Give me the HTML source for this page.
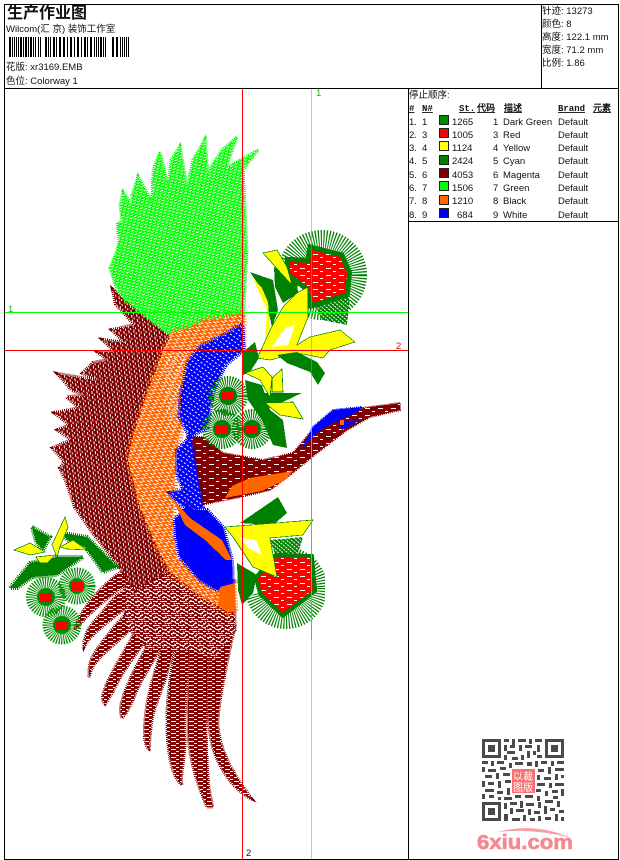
<!DOCTYPE html>
<html><head><meta charset="utf-8">
<style>
html,body{margin:0;padding:0;background:#fff;width:620px;height:860px;overflow:hidden}
svg{display:block}
text{font-family:"Liberation Sans","WenQuanYi Zen Hei","Noto Sans CJK SC",sans-serif;font-size:9.5px;fill:#111}
.b{font-weight:bold;text-decoration:underline;font-family:"Liberation Mono","WenQuanYi Zen Hei",monospace;font-size:9px}
.em path,.em use{shape-rendering:crispEdges}
</style></head><body>
<svg width="620" height="860" viewBox="0 0 620 860" xmlns="http://www.w3.org/2000/svg">
<defs>
<pattern id="pg" width="4" height="3" patternUnits="userSpaceOnUse" patternTransform="rotate(12)"><rect x="0" y="0" width="2" height="1" fill="#fff"/><rect x="2" y="2" width="1" height="1" fill="#fff"/></pattern>
<pattern id="pm" width="5" height="5" patternUnits="userSpaceOnUse" patternTransform="rotate(-8)"><rect x="1" y="0" width="1" height="3" fill="#fff"/><rect x="3" y="3" width="1" height="2" fill="#fff"/></pattern>
<pattern id="pn" width="9" height="4" patternUnits="userSpaceOnUse"><rect x="0" y="1" width="5" height="1" fill="#fff"/><rect x="5" y="3" width="3" height="1" fill="#fff"/></pattern>
<pattern id="pk" width="13" height="7" patternUnits="userSpaceOnUse"><rect x="1" y="2" width="5" height="1" fill="#fff"/><rect x="8" y="5" width="3" height="1" fill="#fff"/></pattern>
<pattern id="po" width="7" height="4" patternUnits="userSpaceOnUse" patternTransform="rotate(25)"><rect x="0" y="1" width="4" height="1" fill="#fff"/><rect x="3" y="3" width="3" height="1" fill="#fff"/></pattern>
<pattern id="pb" width="4" height="4" patternUnits="userSpaceOnUse" patternTransform="rotate(35)"><rect x="0" y="1" width="2" height="1" fill="#fff"/></pattern>
<pattern id="pf" width="4" height="3" patternUnits="userSpaceOnUse" patternTransform="rotate(35)"><rect x="0" y="1" width="2" height="1" fill="#fff"/></pattern>
<pattern id="pfl" width="3" height="3" patternUnits="userSpaceOnUse" patternTransform="rotate(40)"><rect x="0" y="1" width="2" height="1" fill="#fff"/></pattern>
<clipPath id="cf1"><path d="M280 225H375V335H310L305 290 280 262Z"/></clipPath>
<clipPath id="cf2"><path d="M243 600L262 590 280 540H325V640H240Z"/></clipPath>
<path id="wing" d="M258 150L240 160 226 168 237 137 222 150 212 165 208 173 205 139 193 160 187 187 180 146 171 160 168 187 160 152 153 170 152 202 138 176 132 195 132 205 123 192 120 205 122 222 117 223 119 240 117 250 110 268 115 285 125 300 150 320 173 337 185 345 243 325 247 250 243 170Z"/>
<path id="up" d="M113 290L116 304 135 325 112 330 125 343 103 340 115 352 98 352 108 360 93 363 83 373 105 382 58 374 72 390 88 396 67 397 80 408 55 413 70 425 58 430 72 440 53 448 65 462 60 468 67 483 75 507 93 533 117 563 135 590 170 570 150 520 135 470 140 420 155 385 170 350 172 337 150 320 125 300Z"/>
<path id="base" d="M125 570L170 565 235 610 235 630 215 660 190 650 150 650 125 625Z"/>
<path id="low" d="M125 570L170 565 235 610 235 630 215 660 190 650 150 650 125 625Z
M235 625C228 660 218 700 218 725 220 755 238 780 252 799 235 792 218 768 212 745 206 720 208 680 210 650Z
M210 640C207 680 205 725 207 760 208 785 210 795 213 807L207 807C200 790 192 770 189 745 186 715 190 680 190 640Z
M190 640C188 680 183 710 185 740 185 760 180 775 182 785 175 780 170 765 168 745 165 715 168 680 178 640Z
M175 640C168 680 158 695 153 715 150 730 150 742 149 749 144 745 144 735 145 720 147 695 155 670 165 640Z
M165 640C152 665 140 680 133 700 128 710 126 714 122 718 120 712 120 708 122 700 128 680 140 660 150 640Z
M150 635C135 655 120 675 113 692L105 704C101 700 102 695 105 688 112 670 125 650 135 632Z
M135 625C115 645 100 655 92 668L89 677C88 665 92 655 98 648 105 638 115 625 125 615Z
M125 608C105 625 90 635 84 647 83 635 90 625 100 615 108 605 115 595 125 590Z
M125 585C105 600 90 612 75 630 78 615 90 600 100 590 108 582 115 575 125 570Z"/>
<path id="org" d="M165 346L172 333 190 328 205 320 225 318 243 312 243 350 200 350 190 368 183 420 177 450 175 477 173 517 177 557 200 580 220 583 233 583 235 612 228 612 200 595 170 572 157 547 140 507 128 460 132 440 147 393 160 360Z"/>
<path id="neck" d="M187 437L203 437 223 453 263 460 293 453 310 433 337 417 363 408 400 403 400 410 370 417 347 430 317 453 290 475 270 490 240 497 200 505 195 480Z"/>
<path id="blu1" d="M242 325L225 335 200 347 188 363 181 395 180 417 190 437 207 427 213 390 225 365 243 350Z"/>
<path id="blu2" d="M190 437L177 450 177 473 183 490 170 493 180 505 197 510 203 507 198 477Z"/>
<path id="blu3" d="M175 520L176 537 180 557 200 580 217 590 233 585 232 560 223 527 207 510 195 510 187 505Z"/>
</defs>

<g class="em">
<!-- lower wing -->
<use href="#low" fill="#800000" stroke="#800000" stroke-width="3" stroke-dasharray="1 1"/>
<use href="#low" fill="url(#pn)"/>
<use href="#base" fill="url(#pf)"/>
<!-- upper left wing -->
<use href="#up" fill="#800000" stroke="#800000" stroke-width="4" stroke-dasharray="1 1"/>
<use href="#up" fill="url(#pm)"/>
<!-- green wing -->
<use href="#wing" fill="#00ff00" stroke="#00ff00" stroke-width="3" stroke-dasharray="1 1"/>
<use href="#wing" fill="url(#pg)"/>
<!-- neck -->
<use href="#neck" fill="#800000" stroke="#800000" stroke-width="2" stroke-dasharray="1 1"/>
<use href="#neck" fill="url(#pk)"/>
<path d="M232 486L250 478 293 471 285 480 262 491 225 498Z" fill="#ff6600"/>
<!-- orange -->
<use href="#org" fill="#ff6600" stroke="#ff6600" stroke-width="7" stroke-dasharray="1 2"/>
<use href="#org" fill="url(#po)"/>
<path d="M165 350L185 345 185 400 172 440 165 400Z" fill="url(#pb)"/>
<!-- blue -->
<use href="#blu1" fill="#0000ff" stroke="#0000ff" stroke-width="5" stroke-dasharray="1 1"/>
<use href="#blu1" fill="url(#pb)"/>
<use href="#blu2" fill="#0000ff" stroke="#0000ff" stroke-width="4" stroke-dasharray="1 1"/>
<use href="#blu2" fill="url(#pb)"/>
<use href="#blu3" fill="#0000ff" stroke="#0000ff" stroke-width="4" stroke-dasharray="1 1"/>
<path d="M172 498L190 518 222 540 232 560 226 560 205 540 185 525Z" fill="#ff6600"/>
<path d="M220 587L235 583 236 612 228 612 218 605Z" fill="#ff6600"/>
<!-- head blue -->
<path d="M303 447L313 427 333 410 362 407 357 412 337 420 317 432Z" fill="#0000ff" stroke="#0000ff" stroke-width="2" stroke-dasharray="1 1"/>
<path d="M336 420L350 421 360 420 350 426 342 430Z" fill="#0000ff"/><rect x="340" y="420" width="4" height="5" fill="#ff6600"/>

<!-- top-right flower -->
<circle cx="322" cy="275" r="32" fill="none" stroke="#008000" stroke-width="26" stroke-dasharray="1 1.3" clip-path="url(#cf1)"/>
<path d="M312 298L350 298 347 325 322 320Z" fill="#008000"/><path d="M312 298L350 298 347 325 322 320Z" fill="url(#pfl)"/>
<path d="M312 250L340 257 347 273 345 293 313 303 308 287 290 273 290 262 310 263Z" fill="#008000" stroke="#008000" stroke-width="10"/>
<path d="M312 250L340 257 347 273 345 293 313 303 308 287 290 273 290 262 310 263Z" fill="#ff0000"/>
<path d="M312 250L340 257 347 273 345 293 313 303 308 287 290 273 290 262 310 263Z" fill="url(#pk)"/>
<path d="M274 267L297 280 298 293 283 303 275 287Z" fill="#008000"/>
<path d="M263 253L277 250 287 267 292 285 280 272Z" fill="#ffff00" stroke="#008000" stroke-width=".7"/>
<path d="M250 272L273 280 278 310 272 327 268 310 260 287Z" fill="#008000"/>
<path d="M253 278L262 288 268 302 270 327 265 340 267 310Z" fill="#ffff00"/>
<path d="M262 348L270 330 283 307 297 293 308 287 308 317 297 345 310 337 340 330 355 342 330 350 323 358 297 353 270 360 257 358Z" fill="#ffff00" stroke="#008000" stroke-width=".7"/>
<path d="M272 347L285 328 295 325 288 345Z" fill="#fff"/>
<path d="M277 355L297 352 317 362 325 373 318 385 310 372 287 363Z" fill="#008000"/>
<path d="M242 353L255 342 259 358 250 372 243 375Z" fill="#008000"/>
<!-- small flowers centre -->
<circle cx="228" cy="396" r="13" fill="none" stroke="#008000" stroke-width="14" stroke-dasharray="1 1"/>
<circle cx="222" cy="429" r="13" fill="none" stroke="#008000" stroke-width="14" stroke-dasharray="1 1"/>
<circle cx="252" cy="429" r="13" fill="none" stroke="#008000" stroke-width="14" stroke-dasharray="1 1"/>
<circle cx="228" cy="396" r="9" fill="#008000"/><circle cx="222" cy="429" r="9" fill="#008000"/><circle cx="252" cy="429" r="9" fill="#008000"/>
<path d="M245 380L262 385 270 410 283 420 287 448 273 445 262 420 248 400Z" fill="#008000"/>
<path d="M263 393L302 393 283 402 268 408Z" fill="#008000"/>
<path d="M245 373L263 367 272 377 270 397 260 380Z" fill="#ffff00" stroke="#008000" stroke-width=".7"/>
<path d="M272 378L282 369 283 392 272 392Z" fill="#ffff00" stroke="#008000" stroke-width=".7"/>
<path d="M265 403L293 402 303 419 280 415Z" fill="#ffff00" stroke="#008000" stroke-width=".7"/>
<rect x="222" y="392" width="12" height="8" fill="#f00"/><rect x="216" y="425" width="12" height="8" fill="#f00"/><rect x="246" y="425" width="12" height="8" fill="#f00"/>

<!-- lower-right flower -->
<circle cx="286" cy="588" r="30" fill="none" stroke="#008000" stroke-width="22" stroke-dasharray="1 1.3" clip-path="url(#cf2)"/>
<path d="M240 523L278 497 287 513 273 525Z" fill="#008000"/>
<path d="M270 540L303 537 297 557 277 560Z" fill="#008000"/><path d="M270 540L303 537 297 557 277 560Z" fill="url(#pfl)"/>
<path d="M237 563L257 575 253 593 242 605 238 590Z" fill="#008000"/>
<path d="M258 578L277 557 310 558 313 590 283 613 262 593Z" fill="#008000" stroke="#008000" stroke-width="8"/>
<path d="M258 578L277 557 310 558 313 590 283 613 262 593Z" fill="#ff0000"/>
<path d="M258 578L277 557 310 558 313 590 283 613 262 593Z" fill="url(#pk)"/>
<path d="M225 527L313 520 303 535 270 538 277 577 253 567 233 537Z" fill="#ffff00" stroke="#008000" stroke-width=".7"/>
<path d="M240 538L256 540 262 555 248 548Z" fill="#fff"/>

<!-- left flowers -->
<path d="M10 588L30 563 57 557 83 557 57 575 33 577 17 588Z" fill="#008000" stroke="#008000" stroke-width="4" stroke-dasharray="1 1"/>
<path d="M32 527L50 537 43 550 36 542Z" fill="#008000" stroke="#008000" stroke-width="4" stroke-dasharray="1 1"/>
<path d="M63 533L87 537 117 567 103 572 85 547 67 540Z" fill="#008000" stroke="#008000" stroke-width="4" stroke-dasharray="1 1"/>
<path d="M14 550L30 543 45 552 30 555Z" fill="#ffff00" stroke="#008000" stroke-width=".7"/>
<path d="M36 557L55 555 47 563 40 563Z" fill="#ffff00" stroke="#008000" stroke-width=".7"/>
<path d="M52 545L65 517 68 527 60 547 57 557Z" fill="#ffff00" stroke="#008000" stroke-width=".7"/>
<path d="M60 547L73 540 87 550 67 549Z" fill="#ffff00" stroke="#008000" stroke-width=".7"/>
<circle cx="77" cy="586" r="12" fill="none" stroke="#009000" stroke-width="13" stroke-dasharray="1 1"/><circle cx="77" cy="586" r="8" fill="#009000"/>
<circle cx="46" cy="597" r="13" fill="none" stroke="#009000" stroke-width="14" stroke-dasharray="1 1"/><circle cx="46" cy="597" r="9" fill="#009000"/>
<circle cx="62" cy="625" r="13" fill="none" stroke="#009000" stroke-width="13" stroke-dasharray="1 1"/><circle cx="62" cy="625" r="9" fill="#009000"/>
<rect x="71" y="582" width="12" height="9" fill="#f00"/><rect x="40" y="593" width="12" height="9" fill="#f00"/><rect x="56" y="621" width="12" height="9" fill="#f00"/>
</g>

<!-- guide lines -->
<g shape-rendering="crispEdges">
<rect x="4" y="312" width="404" height="1" fill="#00ff00"/>
<rect x="311" y="88" width="1" height="771" fill="#00ff00" opacity=".55"/>
<rect x="311" y="430" width="1" height="210" fill="#00ff00"/>
<rect x="242" y="88" width="1" height="771" fill="#ff0000"/>
<rect x="4" y="350" width="404" height="1" fill="#ff0000"/>
</g>
<text x="316" y="96" style="fill:#00c000">1</text>
<text x="8" y="312" style="fill:#00c000">1</text>
<text x="396" y="349" style="fill:#e00000">2</text>
<text x="246" y="856" style="fill:#111">2</text>

<!-- frame -->
<g fill="#000" shape-rendering="crispEdges">
<rect x="4" y="4" width="614" height="1"/>
<rect x="4" y="4" width="1" height="855"/>
<rect x="618" y="4" width="1" height="855"/>
<rect x="4" y="859" width="615" height="1"/>
<rect x="4" y="88" width="614" height="1"/>
<rect x="541" y="4" width="1" height="84"/>
<rect x="408" y="88" width="1" height="771"/>
<rect x="408" y="221" width="210" height="1"/>
</g>

<!-- header -->
<text x="7" y="18" style="font-size:16px;font-weight:bold">生产作业图</text>
<text x="6" y="32">Wilcom(汇 京) 装饰工作室</text>
<g fill="#000" shape-rendering="crispEdges">
<path d="M9 37h2v20h-2zM12 37h1v20h-1zM14 37h1v20h-1zM16 37h1v20h-1zM18 37h1v20h-1zM20 37h2v20h-2zM23 37h1v20h-1zM25 37h2v20h-2zM28 37h1v20h-1zM30 37h2v20h-2zM33 37h1v20h-1zM35 37h1v20h-1zM38 37h1v20h-1zM40 37h1v20h-1zM45 37h2v20h-2zM48 37h1v20h-1zM50 37h1v20h-1zM53 37h2v20h-2zM56 37h1v20h-1zM59 37h2v20h-2zM63 37h2v20h-2zM67 37h1v20h-1zM70 37h2v20h-2zM74 37h1v20h-1zM77 37h2v20h-2zM81 37h1v20h-1zM84 37h2v20h-2zM87 37h1v20h-1zM90 37h2v20h-2zM94 37h1v20h-1zM96 37h1v20h-1zM98 37h1v20h-1zM100 37h2v20h-2zM103 37h1v20h-1zM105 37h1v20h-1zM112 37h2v20h-2zM116 37h2v20h-2zM120 37h1v20h-1zM122 37h1v20h-1zM124 37h1v20h-1zM126 37h1v20h-1zM128 37h1v20h-1z"/>
</g>
<text x="6" y="70">花版:  xr3169.EMB</text>
<text x="6" y="84">色位:  Colorway 1</text>

<text x="542" y="14">针迹:  13273</text>
<text x="542" y="27">颜色:  8</text>
<text x="542" y="40">高度:  122.1 mm</text>
<text x="542" y="53">宽度:  71.2 mm</text>
<text x="542" y="66">比例:  1.86</text>

<text x="409" y="98">停止顺序:</text>
<text class="b" x="409" y="111">#</text>
<text class="b" x="422" y="111">N#</text>
<text class="b" x="459" y="111">St.</text>
<text class="b" x="477" y="111">代码</text>
<text class="b" x="504" y="111">描述</text>
<text class="b" x="558" y="111">Brand</text>
<text class="b" x="593" y="111">元素</text>

<g shape-rendering="crispEdges" stroke="#222" stroke-width="1">
<rect x="439.5" y="115.5" width="9" height="9" fill="#008c00"/>
<rect x="439.5" y="128.5" width="9" height="9" fill="#ff0000"/>
<rect x="439.5" y="141.5" width="9" height="9" fill="#ffff00"/>
<rect x="439.5" y="155.5" width="9" height="9" fill="#008000"/>
<rect x="439.5" y="168.5" width="9" height="9" fill="#800000"/>
<rect x="439.5" y="181.5" width="9" height="9" fill="#00ff00"/>
<rect x="439.5" y="195.5" width="9" height="9" fill="#ff6600"/>
<rect x="439.5" y="208.5" width="9" height="9" fill="#0000ff"/>
</g>
<g>
<text x="409" y="125">1.</text><text x="422" y="125">1</text><text x="452" y="125">1265</text><text x="493" y="125">1</text><text x="503" y="125">Dark Green</text><text x="558" y="125">Default</text>
<text x="409" y="138">2.</text><text x="422" y="138">3</text><text x="452" y="138">1005</text><text x="493" y="138">3</text><text x="503" y="138">Red</text><text x="558" y="138">Default</text>
<text x="409" y="151">3.</text><text x="422" y="151">4</text><text x="452" y="151">1124</text><text x="493" y="151">4</text><text x="503" y="151">Yellow</text><text x="558" y="151">Default</text>
<text x="409" y="164">4.</text><text x="422" y="164">5</text><text x="452" y="164">2424</text><text x="493" y="164">5</text><text x="503" y="164">Cyan</text><text x="558" y="164">Default</text>
<text x="409" y="178">5.</text><text x="422" y="178">6</text><text x="452" y="178">4053</text><text x="493" y="178">6</text><text x="503" y="178">Magenta</text><text x="558" y="178">Default</text>
<text x="409" y="191">6.</text><text x="422" y="191">7</text><text x="452" y="191">1506</text><text x="493" y="191">7</text><text x="503" y="191">Green</text><text x="558" y="191">Default</text>
<text x="409" y="204">7.</text><text x="422" y="204">8</text><text x="452" y="204">1210</text><text x="493" y="204">8</text><text x="503" y="204">Black</text><text x="558" y="204">Default</text>
<text x="409" y="218">8.</text><text x="422" y="218">9</text><text x="457" y="218">684</text><text x="493" y="218">9</text><text x="503" y="218">White</text><text x="558" y="218">Default</text>
</g>

<!-- QR -->
<g fill="#4a4a4a" shape-rendering="crispEdges">
<path d="M482 739h19v19h-19zM485 742v13h13v-13z" fill-rule="evenodd"/><rect x="488" y="745" width="7" height="7"/>
<path d="M545 739h19v19h-19zM548 742v13h13v-13z" fill-rule="evenodd"/><rect x="551" y="745" width="7" height="7"/>
<path d="M482 802h19v19h-19zM485 805v13h13v-13z" fill-rule="evenodd"/><rect x="488" y="808" width="7" height="7"/>
<path d="M504 739h5v3h-5zM512 739h3v7h-3zM518 739h8v3h-8zM529 739h3v5h-3zM535 739h7v3h-7zM504 745h3v6h-3zM510 745h5v3h-5zM519 745h3v6h-3zM525 745h7v3h-7zM537 745h3v7h-3zM507 751h8v3h-8zM527 751h3v7h-3zM533 751h3v4h-3zM504 755h3v5h-3zM512 757h6v3h-6zM521 755h3v5h-3zM537 755h5v3h-5z"/>
<path d="M482 761h6v3h-6zM491 761h3v5h-3zM497 761h7v3h-7zM509 763h3v5h-3zM515 762h8v3h-8zM527 762h5v4h-5zM535 761h3v6h-3zM541 761h6v3h-6zM551 761h3v5h-3zM557 761h7v3h-7zM482 767h3v5h-3zM488 769h8v3h-8zM500 767h6v3h-6zM538 769h6v3h-6zM548 767h3v7h-3zM555 768h9v3h-9zM485 775h7v3h-7zM496 773h3v6h-3zM503 773h7v3h-7zM537 775h3v5h-3zM544 777h7v3h-7zM555 774h3v6h-3zM561 775h3v3h-3z"/>
<path d="M482 781h3v6h-3zM488 782h6v3h-6zM498 781h3v7h-3zM505 780h6v3h-6zM537 783h8v3h-8zM549 783h3v5h-3zM555 783h9v3h-9zM485 789h9v3h-9zM497 791h6v3h-6zM507 788h3v7h-3zM536 789h5v3h-5zM545 791h3v5h-3zM552 790h6v3h-6zM561 789h3v7h-3zM482 794h3v5h-3zM489 795h5v3h-5zM498 797h3v3h-3zM504 797h8v3h-8zM515 795h6v3h-6zM525 795h8v3h-8zM537 796h3v5h-3zM553 796h5v3h-5z"/>
<path d="M504 803h3v6h-3zM510 802h7v3h-7zM520 801h3v7h-3zM526 803h8v3h-8zM538 802h3v6h-3zM545 800h8v3h-8zM557 801h3v6h-3zM510 808h3v6h-3zM516 809h8v3h-8zM528 809h3v6h-3zM534 811h6v3h-6zM544 806h3v8h-3zM550 808h5v3h-5zM559 810h5v3h-5zM504 814h4v7h-4zM512 818h8v3h-8zM523 815h3v6h-3zM530 818h5v3h-5zM538 816h3v5h-3zM545 817h6v3h-6zM555 814h3v7h-3zM561 817h3v4h-3z"/>
</g>
<rect x="512" y="769" width="23" height="24" fill="#f97070"/>
<text x="513" y="780" style="font-size:10px;fill:#fff">以裁</text>
<text x="513" y="791" style="font-size:10px;fill:#fff">图版</text>

<!-- 6xiu logo -->
<path d="M497 832Q535 822 571 838 535 828 497 832Z" fill="#f4a0a8"/>
<text x="477" y="849" style="font-family:'Liberation Sans',sans-serif;font-size:20px;font-weight:bold;fill:#f4888f;stroke:#f4888f;stroke-width:.6" textLength="96" lengthAdjust="spacingAndGlyphs">6xiu.com</text>
</svg>
</body></html>
